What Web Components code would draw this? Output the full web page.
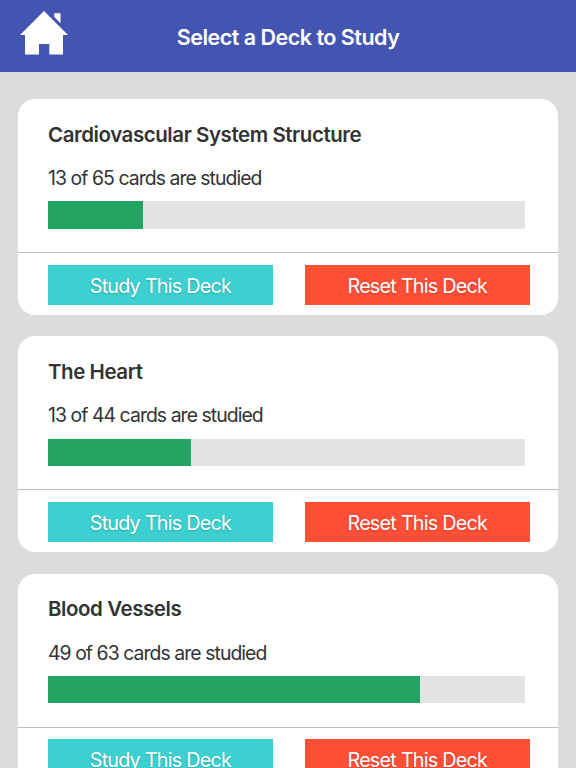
<!DOCTYPE html>
<html lang="en">
<head>
<meta charset="utf-8">
<title>Select a Deck to Study</title>
<style>
    body {
        margin: 0;
        height: 768px;
        overflow: hidden;
        background: #dcdcdc;
        color: #333;
        font-family: Inter, "Liberation Sans", sans-serif;
    }
</style>
</head>
<body>

<template id="app-header">
    <style>
        :host {
            display: grid;
            grid-template-columns: 88px 1fr 88px;
            align-items: center;
            height: 72px;
            background: #4355b1;
            color: #fff;
        }
        svg {
            display: block;
            width: 88px;
            height: 72px;
            fill: #fff;
        }
        h1 {
            margin: 0;
            padding-top: 1px;
            font-size: 21.5px;
            font-weight: 600;
            line-height: 28px;
            letter-spacing: -0.5px;
            text-align: center;
            white-space: nowrap;
        }
    </style>
    <svg viewBox="0 0 88 72" role="img" aria-label="Home">
        <path d="M44 11 20 35h5v19.5h14V44h10.3v10.5H63V35h5z"/>
        <path d="M54.3 13.2h6.2v10l-6.2-6.2z"/>
    </svg>
    <h1><slot></slot></h1>
</template>

<template id="study-progress">
    <style>
        :host {
            display: block;
            width: 477px;
            height: 27.3px;
            background: #e2e4e3;
        }
        div {
            width: 0;
            height: 100%;
            background: #22a463;
        }
    </style>
    <div></div>
</template>

<template id="deck-button">
    <style>
        :host {
            display: block;
        }
        button {
            display: block;
            width: 100%;
            height: 40.4px;
            margin: 0;
            padding: 2px 0 0;
            border: 0;
            background: #3dd0d0;
            color: #fff;
            font: 400 19.8px/38px Inter, "Liberation Sans", sans-serif;
            letter-spacing: -0.82px;
            word-spacing: 0.3px;
            text-shadow: 0 1px 2px rgba(0, 0, 0, .2);
        }
        :host([kind="reset"]) button {
            background: #ff5037;
        }
    </style>
    <button type="button"><slot></slot></button>
</template>

<template id="study-deck">
    <style>
        :host {
            display: block;
            height: 215.6px;
            border-radius: 17px;
            background: #fff;
        }
        .info {
            box-sizing: border-box;
            height: 154px;
            padding: 22.7px 30px 0;
            border-bottom: 1px solid #bcbcbc;
        }
        h2 {
            margin: 0 0 17.5px;
            font-size: 20.5px;
            font-weight: 600;
            line-height: 26px;
            letter-spacing: -0.44px;
        }
        p {
            margin: 0 0 10.2px;
            font-size: 19.4px;
            line-height: 26px;
            letter-spacing: -0.94px;
        }
        .actions {
            display: grid;
            grid-template-columns: 1fr 1fr;
            gap: 32px;
            padding: 11.7px 28px 0 30px;
        }
    </style>
    <div class="info">
        <h2><slot></slot></h2>
        <p></p>
        <study-progress></study-progress>
    </div>
    <div class="actions">
        <deck-button>Study This Deck</deck-button>
        <deck-button kind="reset">Reset This Deck</deck-button>
    </div>
</template>

<template id="deck-list">
    <style>
        :host {
            display: grid;
            gap: 21.7px;
            padding: 27px 18.3px 0 18px;
        }
    </style>
    <slot></slot>
</template>

<app-header>Select a Deck to Study</app-header>
<deck-list>
    <study-deck studied="13" total="65" percent="20">Cardiovascular System Structure</study-deck>
    <study-deck studied="13" total="44" percent="30">The Heart</study-deck>
    <study-deck studied="49" total="63" percent="78">Blood Vessels</study-deck>
</deck-list>

<script>
(() => {
    // every element clones the template that has its own name
    class TemplateElement extends HTMLElement {
        constructor() {
            super()
            const template = document.getElementById(this.localName)
            this.attachShadow({mode: 'open'})
            this.shadowRoot.appendChild(document.importNode(template.content, true))
        }
    }

    class StudyProgress extends TemplateElement {
        static get observedAttributes() {
            return ['value']
        }
        attributeChangedCallback(name, oldVal, newVal) {
            this.shadowRoot.querySelector('div').style.width = `${newVal}%`
        }
    }

    class StudyDeck extends TemplateElement {
        connectedCallback() {
            const studied = this.getAttribute('studied')
            const total = this.getAttribute('total')
            this.shadowRoot.querySelector('p').textContent = `${studied} of ${total} cards are studied`
            this.shadowRoot.querySelector('study-progress').setAttribute('value', this.getAttribute('percent'))
        }
    }

    window.customElements.define('app-header', class extends TemplateElement {})
    window.customElements.define('deck-list', class extends TemplateElement {})
    window.customElements.define('deck-button', class extends TemplateElement {})
    window.customElements.define('study-progress', StudyProgress)
    window.customElements.define('study-deck', StudyDeck)
})()
</script>
</body>
</html>
